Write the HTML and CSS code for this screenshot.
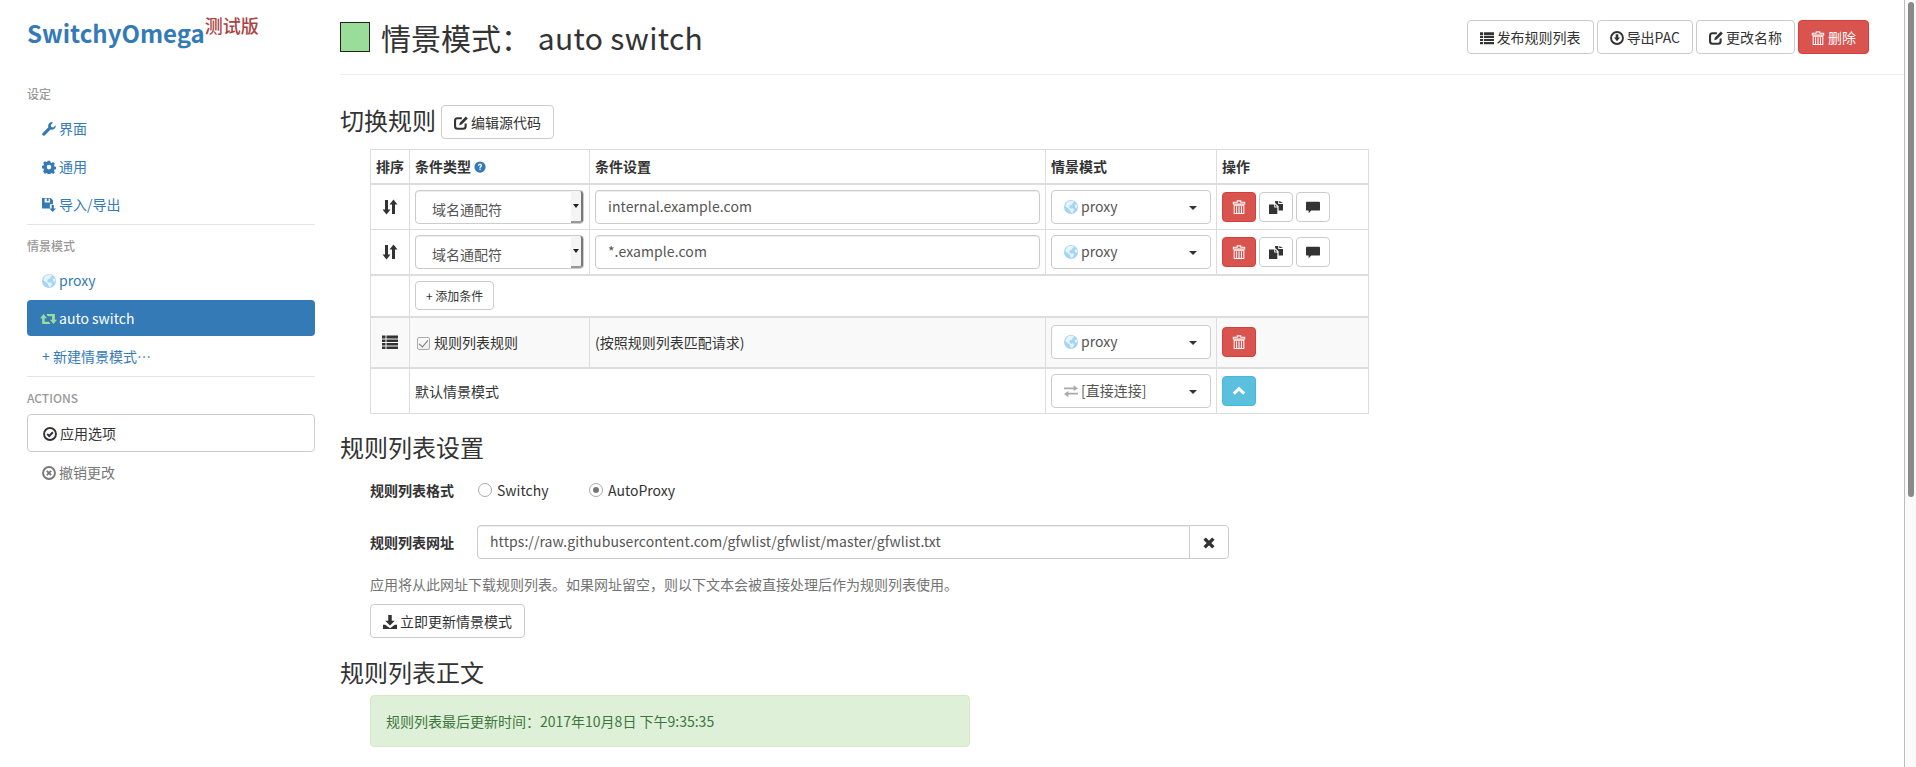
FILE: index.html
```html
<!DOCTYPE html>
<html>
<head>
    <meta charset="UTF-8">
    <title>SwitchyOmega</title>
    <link rel="stylesheet" href="styles.css">
</head>
<body>
    <svg class="defs" width="0" height="0">
        <symbol id="i-wrench" viewBox="0 0 16 16"><path d="M15.6 3.6l-2.7 2.7-2.3-.6-.6-2.3L12.700.7C10.900 0 9 .4 8 1.700 6.900 3 6.800 4.600 7.300 6L.8 12.500c-.8.8-.8 1.900-.1 2.600s1.900.7 2.600-.1L9.800 8.500c1.500.5 3.100.3 4.400-.9 1.300-1.100 1.800-2.700 1.400-4z" fill="currentColor"/></symbol>
        <symbol id="i-cog" viewBox="0 0 16 16"><path fill-rule="evenodd" d="M6.500 1h3l.4 2 1.300.6 1.800-1.100 2.100 2.100-1.100 1.800.6 1.300 2 .4v3l-2 .4-.6 1.300 1.100 1.800-2.100 2.100-1.800-1.100-1.300.6-.4 2h-3l-.4-2-1.300-.6-1.800 1.100L.9 13.500 2 11.700l-.6-1.300-2-.4v-3l2-.4L2 5.300.9 3.500 3 1.400l1.800 1.100 1.300-.6zM8 5.700a2.800 2.800 0 100 5.600 2.800 2.800 0 000-5.600z" fill="currentColor" transform="translate(.4 0) scale(.95)"/></symbol>
        <symbol id="i-floppy" viewBox="0 0 16 16"><path fill-rule="evenodd" d="M0 0h10l2.500 2.500V7H9v5H0zM3 .5v4.500h6V.5H7.500v3H5.500V.5z" fill="currentColor"/><path d="M11 8h2.500v4H16l-3.700 4-3.800-4H11z" fill="currentColor"/></symbol>
        <symbol id="i-globe" viewBox="0 0 16 16"><circle cx="8" cy="8" r="8" fill="#a5d5f5"/><path d="M5 1.500c2-1 5-1 6.500.5L10 3.500 9 5.500 6.500 6 6 8.500 8 10l2.500-.5 1 2-2 3H8L6.500 11 3.500 8.500 1.500 7c.5-2.500 2-4.500 3.500-5.500zM12 5.500l2.500-.5.800 3-1.800 1.500z" fill="#e8f4fc"/></symbol>
        <symbol id="i-retweet" viewBox="0 0 24 16"><path d="M5 1L0 7h3v8h12l-2.500-3H6.500V7H10zM9 1h12v8h3l-5 6-5-6h3V4h-6z" fill="currentColor"/></symbol>
        <symbol id="i-ok-circle" viewBox="0 0 16 16"><circle cx="8" cy="8" r="6.800" fill="none" stroke="currentColor" stroke-width="2.200"/><path d="M4.800 8l2.300 2.300 4.200-4.300" fill="none" stroke="currentColor" stroke-width="2.200"/></symbol>
        <symbol id="i-remove-circle" viewBox="0 0 16 16"><circle cx="8" cy="8" r="6.800" fill="none" stroke="currentColor" stroke-width="2.200"/><path d="M5.500 5.500l5 5M10.500 5.500l-5 5" fill="none" stroke="currentColor" stroke-width="2.200"/></symbol>
        <symbol id="i-list" viewBox="0 0 16 16"><path d="M0 1.500h3.500v3H0zM4.500 1.500H16v3H4.500zM0 5.500h3.500v2.500H0zM4.500 5.500H16v2.500H4.500zM0 9h3.500v2.500H0zM4.500 9H16v2.500H4.500zM0 12.500h3.500v2.500H0zM4.500 12.500H16v2.500H4.500z" fill="currentColor"/></symbol>
        <symbol id="i-down-circle" viewBox="0 0 16 16"><circle cx="8" cy="8" r="6.800" fill="none" stroke="currentColor" stroke-width="2.200"/><path d="M6.500 3.800h3v3.700h2L8 11.800 4.500 7.500h2z" fill="currentColor"/></symbol>
        <symbol id="i-edit" viewBox="0 0 16 16"><path d="M9 2.500H4C2.400 2.500 1.200 3.700 1.200 5.300v6.500c0 1.600 1.200 2.800 2.800 2.800h6.500c1.600 0 2.800-1.200 2.800-2.800V8.500" fill="none" stroke="currentColor" stroke-width="2.400"/><path d="M13.500 .5l2.300 2.300-7 7L6 10.500l.6-2.800z" fill="currentColor"/></symbol>
        <symbol id="i-trash" viewBox="0 0 16 16"><path d="M6 1h4v1.500h4.500v2h-13v-2H6zM2.500 6h11v9.500h-11zM5.200 7v8M8 7v8M10.800 7v8" fill="none" stroke="currentColor" stroke-width="1.200"/></symbol>
        <symbol id="i-question" viewBox="0 0 16 16"><circle cx="8" cy="8" r="7.500" fill="currentColor"/><path d="M5.300 6.200c.1-1.600 1.200-2.400 2.800-2.400 1.500 0 2.700.8 2.700 2.200 0 1.900-2 1.900-2 3.500H7.200C7.100 7.500 8.900 7.300 8.900 6.100c0-.6-.4-.9-1-.9-.7 0-1 .4-1.100 1zM7.200 10.300h1.700V12H7.200z" fill="#fff"/></symbol>
        <symbol id="i-sort" viewBox="0 0 16 16"><path d="M3 1h3v9.500h2.500L4.500 15.500.5 10.500H3zM10 5.500H7.500L11.500.5l4 5H13V15h-3z" fill="currentColor"/></symbol>
        <symbol id="i-copy" viewBox="0 0 16 16"><path d="M0 5h6v3.500h3.500V16H0z" fill="currentColor"/><path d="M7 5l2.500 2.500H7zM7 1h3.500v3.500H16V12h-5V7L7 3.500z" fill="currentColor"/><path d="M11.700 1L16 3.500h-4.300z" fill="currentColor"/></symbol>
        <symbol id="i-comment" viewBox="0 0 16 16"><path d="M1 2h14c.6 0 1 .4 1 1v8c0 .6-.4 1-1 1H6l-3 3v-3H1c-.6 0-1-.4-1-1V3c0-.6.4-1 1-1z" fill="currentColor"/></symbol>
        <symbol id="i-chevron" viewBox="0 0 16 16"><path d="M2 11L8 5.500l6 5.500" fill="none" stroke="currentColor" stroke-width="3.400"/></symbol>
        <symbol id="i-transfer" viewBox="0 0 16 16"><path d="M0 4h11V1.500L16 5l-5 3V6H0zM16 10H5V8L0 11.500 5 15v-3h11z" fill="currentColor"/></symbol>
        <symbol id="i-download" viewBox="0 0 16 16"><path d="M6 0h4v6.500h3.500L8 12 2.500 6.500H6zM0 11h2.500L8 15l5.500-4H16v5H0z" fill="currentColor"/></symbol>
        <symbol id="i-remove" viewBox="0 0 16 16"><path d="M3 3l10 10M13 3L3 13" fill="none" stroke="currentColor" stroke-width="4"/></symbol>
    </svg>

    <div class="page">
        <aside class="sidebar">
            <h1 class="brand"><a>SwitchyOmega</a><sup>测试版</sup></h1>
            <h4 class="nav-title">设定</h4>
            <ul class="nav">
                <li><a><svg class="icon"><use href="#i-wrench"/></svg>界面</a></li>
                <li><a><svg class="icon"><use href="#i-cog"/></svg>通用</a></li>
                <li><a><svg class="icon"><use href="#i-floppy"/></svg>导入/导出</a></li>
            </ul>
            <div class="divider"></div>
            <h4 class="nav-title">情景模式</h4>
            <ul class="nav">
                <li><a><svg class="icon"><use href="#i-globe"/></svg>proxy</a></li>
                <li class="active"><a><svg class="icon retweet"><use href="#i-retweet"/></svg>auto switch</a></li>
                <li><a>+ 新建情景模式…</a></li>
            </ul>
            <div class="divider"></div>
            <h4 class="nav-title">ACTIONS</h4>
            <ul class="nav">
                <li class="apply"><a><svg class="icon"><use href="#i-ok-circle"/></svg>应用选项</a></li>
                <li class="discard"><a><svg class="icon"><use href="#i-remove-circle"/></svg>撤销更改</a></li>
            </ul>
        </aside>

        <main class="content">
            <header class="page-header">
                <h1 class="page-title"><span class="swatch"></span>情景模式： <span class="name">auto switch</span></h1>
                <div class="actions">
                    <a class="btn"><svg class="icon"><use href="#i-list"/></svg>发布规则列表</a>
                    <a class="btn"><svg class="icon"><use href="#i-down-circle"/></svg>导出PAC</a>
                    <a class="btn"><svg class="icon"><use href="#i-edit"/></svg>更改名称</a>
                    <a class="btn btn-danger"><svg class="icon"><use href="#i-trash"/></svg>删除</a>
                </div>
            </header>

            <section>
                <h3 class="section-title first"><span>切换规则</span><a class="btn"><svg class="icon"><use href="#i-edit"/></svg>编辑源代码</a></h3>
                <table class="rules">
                    <thead>
                        <tr><th class="col-sort">排序</th><th class="col-type">条件类型 <svg class="icon help"><use href="#i-question"/></svg></th><th class="col-cond">条件设置</th><th class="col-profile">情景模式</th><th>操作</th></tr>
                    </thead>
                    <tbody>
                        <tr>
                            <td class="center"><svg class="icon big"><use href="#i-sort"/></svg></td>
                            <td><div class="native-select"><span>域名通配符</span><i class="spin"></i></div></td>
                            <td><div class="input">internal.example.com</div></td>
                            <td><div class="dropdown"><svg class="icon"><use href="#i-globe"/></svg>proxy<i class="caret"></i></div></td>
                            <td class="ops"><a class="btn btn-sm btn-danger"><svg class="icon"><use href="#i-trash"/></svg></a><a class="btn btn-sm"><svg class="icon"><use href="#i-copy"/></svg></a><a class="btn btn-sm"><svg class="icon"><use href="#i-comment"/></svg></a></td>
                        </tr>
                        <tr>
                            <td class="center"><svg class="icon big"><use href="#i-sort"/></svg></td>
                            <td><div class="native-select"><span>域名通配符</span><i class="spin"></i></div></td>
                            <td><div class="input">*.example.com</div></td>
                            <td><div class="dropdown"><svg class="icon"><use href="#i-globe"/></svg>proxy<i class="caret"></i></div></td>
                            <td class="ops"><a class="btn btn-sm btn-danger"><svg class="icon"><use href="#i-trash"/></svg></a><a class="btn btn-sm"><svg class="icon"><use href="#i-copy"/></svg></a><a class="btn btn-sm"><svg class="icon"><use href="#i-comment"/></svg></a></td>
                        </tr>
                    </tbody>
                    <tbody>
                        <tr class="add-row">
                            <td></td>
                            <td colspan="4"><a class="btn btn-xs">+ 添加条件</a></td>
                        </tr>
                    </tbody>
                    <tbody>
                        <tr class="striped">
                            <td class="center"><svg class="icon big"><use href="#i-list"/></svg></td>
                            <td><span class="check"></span>规则列表规则</td>
                            <td>(按照规则列表匹配请求)</td>
                            <td><div class="dropdown"><svg class="icon"><use href="#i-globe"/></svg>proxy<i class="caret"></i></div></td>
                            <td class="ops"><a class="btn btn-sm btn-danger"><svg class="icon"><use href="#i-trash"/></svg></a></td>
                        </tr>
                    </tbody>
                    <tbody>
                        <tr>
                            <td></td>
                            <td colspan="2">默认情景模式</td>
                            <td><div class="dropdown muted-icon"><svg class="icon"><use href="#i-transfer"/></svg>[直接连接]<i class="caret"></i></div></td>
                            <td class="ops"><a class="btn btn-sm btn-info"><svg class="icon"><use href="#i-chevron"/></svg></a></td>
                        </tr>
                    </tbody>
                </table>
            </section>

            <section>
                <h3 class="section-title settings-title">规则列表设置</h3>
                <div class="settings">
                    <div class="form-row format-row">
                        <label class="form-label">规则列表格式</label>
                        <label class="radio"><span class="dot"></span>Switchy</label>
                        <label class="radio"><span class="dot on"></span>AutoProxy</label>
                    </div>
                    <div class="form-row url-row">
                        <label class="form-label">规则列表网址</label>
                        <div class="input-group">
                            <div class="input">https://raw.githubusercontent.com/gfwlist/gfwlist/master/gfwlist.txt</div>
                            <a class="btn addon"><svg class="icon"><use href="#i-remove"/></svg></a>
                        </div>
                    </div>
                    <p class="help-text">应用将从此网址下载规则列表。如果网址留空，则以下文本会被直接处理后作为规则列表使用。</p>
                    <a class="btn"><svg class="icon"><use href="#i-download"/></svg>立即更新情景模式</a>
                </div>
            </section>

            <section>
                <h3 class="section-title source-title">规则列表正文</h3>
                <div class="alert">规则列表最后更新时间：2017年10月8日 下午9:35:35</div>
            </section>
        </main>

        <div class="scrollbar"><div class="thumb"></div></div>
    </div>
</body>
</html>
```

FILE: styles.css
```css
* {
    box-sizing: border-box;
}
html, body {
    margin: 0;
    height: 100%;
    overflow: hidden;
}
body {
    font-family: "Noto Sans CJK SC", "Noto Sans", sans-serif;
    font-size: 14px;
    line-height: 20px;
    color: #333;
    background: #fff;
}
.defs {
    display: block;
    height: 0;
}
a {
    text-decoration: none;
}
.icon {
    display: inline-block;
    width: 14px;
    height: 14px;
    vertical-align: -2px;
    margin-right: 3px;
}

.page {
    display: flex;
    height: 767px;
}
.sidebar {
    width: 340px;
    flex: none;
    padding: 0 25px 0 27px;
}
.brand {
    margin: 17px 0 36px;
    font-size: 24px;
    line-height: 32px;
    font-weight: 700;
    white-space: nowrap;
}
.brand a {
    color: #337ab7;
}
.brand sup {
    font-size: 18px;
    line-height: 0;
    color: #a94442;
    font-weight: 500;
    vertical-align: 10px;
}
.nav-title {
    margin: 0 0 8px;
    font-size: 12px;
    line-height: 17px;
    font-weight: 500;
    color: #999;
}
.nav {
    list-style: none;
    margin: 0;
    padding: 0;
}
.nav li {
    margin-bottom: 2px;
}
.nav a {
    display: block;
    height: 36px;
    padding: 8px 15px;
    line-height: 20px;
    color: #337ab7;
    border-radius: 4px;
}
.nav .active a {
    color: #fff;
    background: #337ab7;
    padding-left: 13px;
}
.retweet {
    width: 17px;
    height: 12px;
    vertical-align: -1px;
    margin-right: 2px;
    color: #99dd99;
}
.apply a {
    height: 38px;
    color: #333;
    border: 1px solid #ccc;
    padding: 8px 15px;
}
.discard a {
    color: #777;
}
.divider {
    height: 1px;
    margin: 0 0 12px;
    background: #e5e5e5;
}

.content {
    flex: 1;
    min-width: 0;
}
.page-header {
    display: flex;
    justify-content: space-between;
    align-items: flex-start;
    height: 75px;
    padding-top: 20px;
    border-bottom: 1px solid #eee;
    padding-right: 47px;
}
.page-title {
    display: flex;
    align-items: center;
    margin: 0;
    font-size: 30px;
    line-height: 34px;
    font-weight: 400;
    white-space: pre;
}
.page-title .name {
    letter-spacing: .35px;
}
.swatch {
    width: 30px;
    height: 30px;
    margin-right: 11px;
    background: #99dd99;
    border: 1px solid #222;
}
.actions {
    display: flex;
    gap: 3px;
}
.btn {
    display: inline-block;
    height: 34px;
    padding: 6px 12px;
    font-size: 14px;
    font-weight: 400;
    line-height: 20px;
    color: #333;
    background: #fff;
    border: 1px solid #ccc;
    border-radius: 4px;
    white-space: nowrap;
    vertical-align: middle;
}
.btn-danger {
    color: #fff;
    background: #d9534f;
    border-color: #d43f3a;
}
.btn-info {
    color: #fff;
    background: #5bc0de;
    border-color: #46b8da;
}
.btn-sm {
    display: inline-flex;
    align-items: center;
    justify-content: center;
    width: 34px;
    height: 30px;
    padding: 0;
    margin-right: 3px;
}
.btn-sm .icon {
    margin: 0;
}
.btn-xs {
    height: 29px;
    padding: 4px 10px;
    font-size: 12px;
}

.section-title {
    display: flex;
    align-items: center;
    gap: 5px;
    font-size: 24px;
    line-height: 34px;
    font-weight: 400;
}
.section-title.first {
    margin: 30px 0 10px;
}
.section-title.first span {
    line-height: 26px;
    padding-bottom: 4px;
}
.settings-title {
    margin: 16px 0 9px;
}
.source-title {
    margin: 17px 0 6px;
}
.rules {
    width: 999px;
    margin-left: 30px;
    table-layout: fixed;
    border-collapse: collapse;
}
.rules th, .rules td {
    padding: 5px;
    border: 1px solid #ddd;
    vertical-align: middle;
    line-height: 20px;
    height: 45px;
}
.rules th {
    height: 34px;
    text-align: left;
    font-weight: 700;
    border-bottom: 2px solid #ddd;
}
.rules tbody + tbody {
    border-top: 2px solid #ddd;
}
.rules .add-row td {
    height: 42px;
    padding: 5px;
}
.rules .striped td {
    height: 51px;
    background: #f9f9f9;
}
.col-sort {
    width: 39px;
}
.col-type {
    width: 180px;
}
.col-cond {
    width: 456px;
}
.col-profile {
    width: 171px;
}
.center {
    text-align: center;
}
.icon.big {
    width: 16px;
    height: 16px;
    margin: 0;
}
.help {
    width: 12px;
    height: 12px;
    color: #337ab7;
    vertical-align: -1px;
}
.input, .dropdown, .native-select {
    position: relative;
    height: 34px;
    padding: 5px 12px;
    color: #555;
    background: #fff;
    border: 1px solid #ccc;
    border-radius: 4px;
    box-shadow: inset 0 1px 1px rgba(0, 0, 0, .075);
    white-space: nowrap;
}
.input {
    letter-spacing: .08px;
}
.dropdown {
    box-shadow: none;
}
.muted-icon .icon {
    color: #aaa;
}
.native-select {
    padding-left: 16px;
    padding-top: 8px;
}
.spin {
    position: absolute;
    top: 0;
    right: 0;
    width: 12px;
    height: 32px;
    background: #f4f4f4;
    border-right: 2px solid #777;
    border-bottom: 2px solid #999;
    border-radius: 0 3px 3px 0;
}
.spin::after {
    content: "";
    position: absolute;
    top: 13px;
    left: 2px;
    border: 3.5px solid transparent;
    border-top: 4px solid #222;
    border-bottom: 0;
}
.caret {
    position: absolute;
    top: 15px;
    right: 13px;
    border: 4px solid transparent;
    border-top-color: #333;
    border-bottom: 0;
}
.check {
    display: inline-block;
    width: 13px;
    height: 13px;
    margin: 0 4px 0 2px;
    vertical-align: -2px;
    border: 1px solid #aaa;
    border-radius: 2px;
    background: linear-gradient(#fbfbfb, #eee);
    position: relative;
}
.check::after {
    content: "";
    position: absolute;
    left: 3px;
    top: 0;
    width: 4px;
    height: 8px;
    border: solid #777;
    border-width: 0 1.500px 1.500px 0;
    transform: rotate(40deg);
}

.settings {
    margin-left: 30px;
}
.form-row {
    display: flex;
    align-items: center;
}
.form-label {
    width: 107px;
    flex: none;
    font-weight: 700;
}
.radio {
    display: flex;
    align-items: center;
    width: 111px;
    padding-left: 1px;
}
.dot {
    position: relative;
    width: 14px;
    height: 14px;
    margin-right: 5px;
    border: 1px solid #aaa;
    border-radius: 50%;
    background: #fff;
}
.dot.on::after {
    content: "";
    position: absolute;
    left: 3px;
    top: 3px;
    width: 6px;
    height: 6px;
    border-radius: 50%;
    background: #777;
}
.format-row {
    height: 34px;
    margin-bottom: 18px;
}
.url-row {
    margin-bottom: 15px;
}
.input-group {
    display: flex;
    width: 752px;
}
.input-group .input {
    flex: 1;
    border-radius: 4px 0 0 4px;
}
.addon {
    width: 40px;
    margin-left: -1px;
    padding: 6px 0;
    text-align: center;
    border-radius: 0 4px 4px 0;
}
.addon .icon {
    margin: 0;
}
.help-text {
    margin: 0 0 10px;
    line-height: 20px;
    color: #737373;
}
.alert {
    width: 600px;
    height: 52px;
    margin-left: 30px;
    padding: 15px;
    color: #3c763d;
    line-height: 20px;
    background: #dff0d8;
    border: 1px solid #d6e9c6;
    border-radius: 4px;
}

.scrollbar {
    position: absolute;
    top: 0;
    right: 0;
    width: 12px;
    height: 767px;
    border-left: 1px solid #bbb;
    background: #fafafa;
}
.thumb {
    width: 6px;
    margin: 2px 0 0 3px;
    height: 495px;
    background: #8a8a8a;
    border-radius: 3px;
}
```
